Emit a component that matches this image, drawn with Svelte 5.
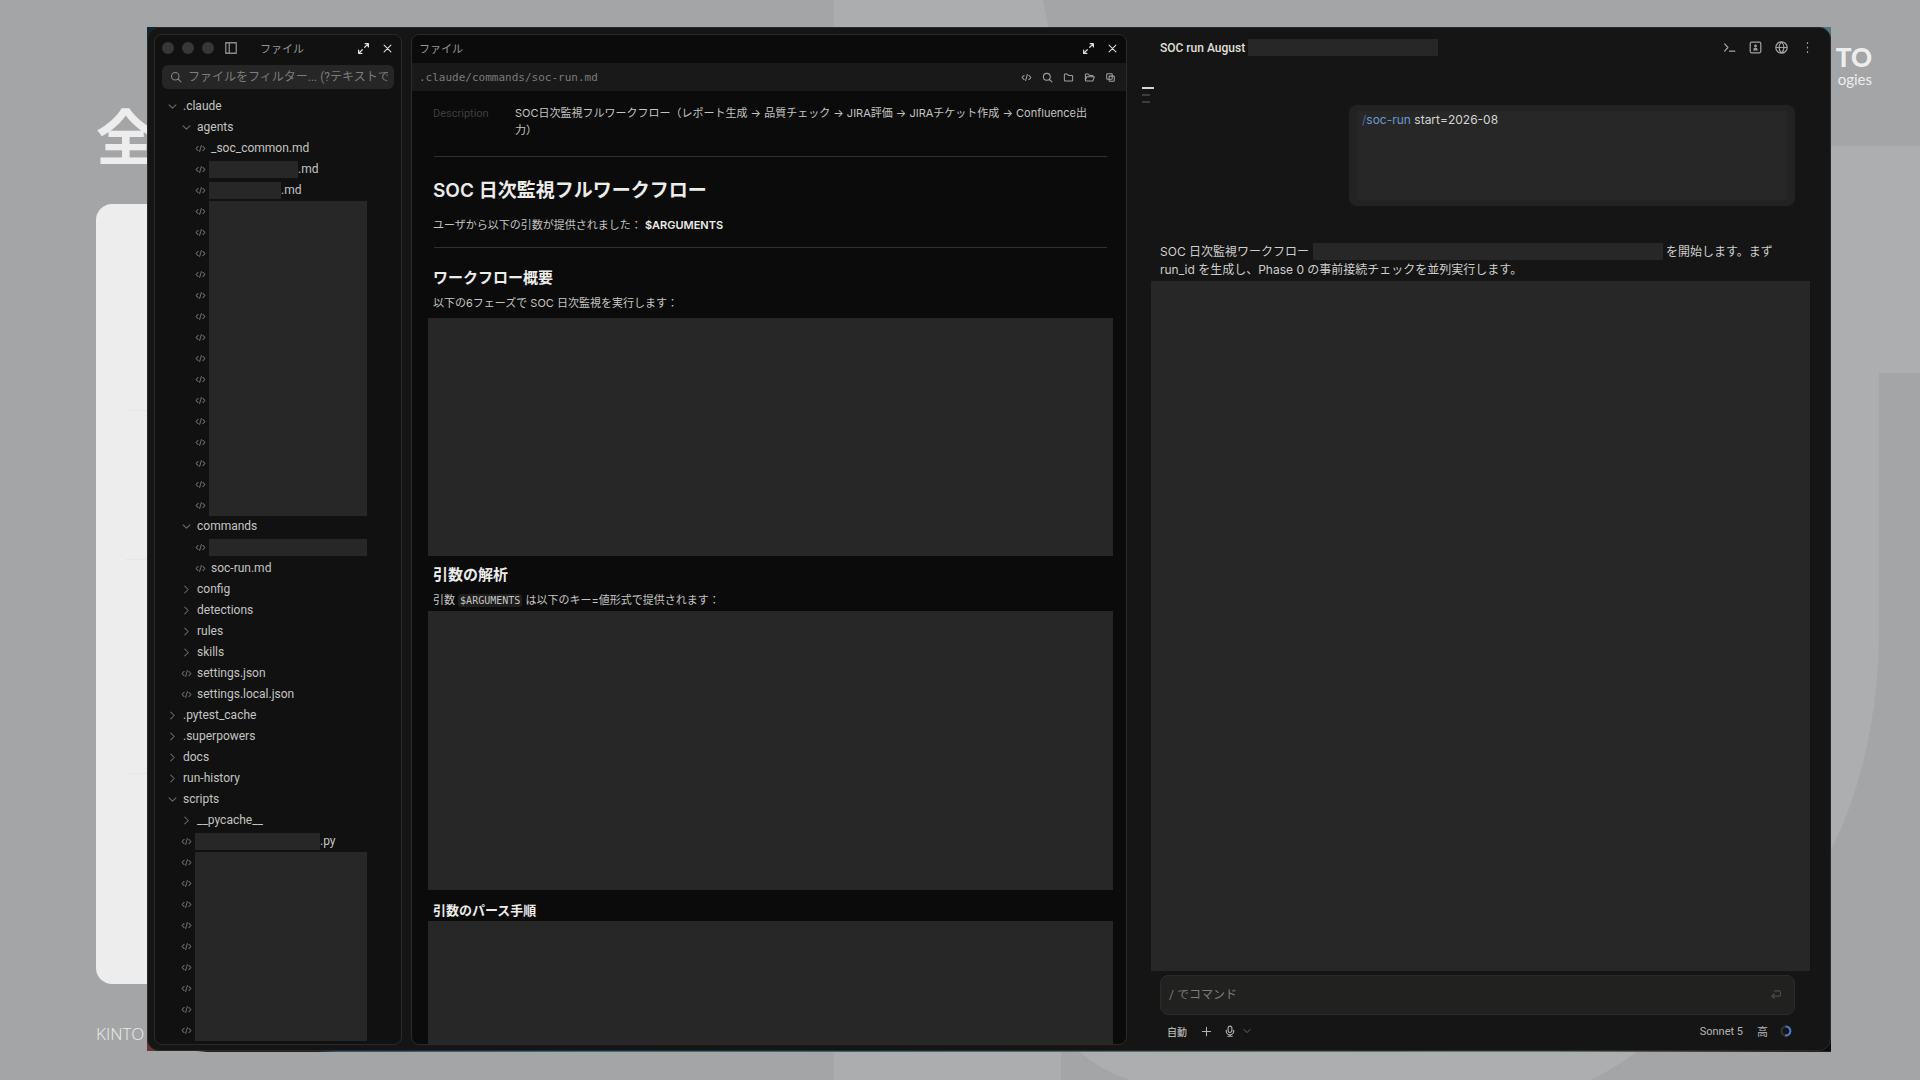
<script>
    // redacted: width of the masked name, rows: number of files under one mask
    const tree = [
        { level: 0, kind: 'open', name: '.claude' },
        { level: 1, kind: 'open', name: 'agents' },
        { level: 2, kind: 'file', name: '_soc_common.md' },
        { level: 2, kind: 'file', name: '.md', redacted: 89 },
        { level: 2, kind: 'file', name: '.md', redacted: 72 },
        { level: 2, kind: 'group', rows: 15, redacted: 158 },
        { level: 1, kind: 'open', name: 'commands' },
        { level: 2, kind: 'file', name: '', redacted: 158 },
        { level: 2, kind: 'file', name: 'soc-run.md' },
        { level: 1, kind: 'closed', name: 'config' },
        { level: 1, kind: 'closed', name: 'detections' },
        { level: 1, kind: 'closed', name: 'rules' },
        { level: 1, kind: 'closed', name: 'skills' },
        { level: 1, kind: 'file', name: 'settings.json' },
        { level: 1, kind: 'file', name: 'settings.local.json' },
        { level: 0, kind: 'closed', name: '.pytest_cache' },
        { level: 0, kind: 'closed', name: '.superpowers' },
        { level: 0, kind: 'closed', name: 'docs' },
        { level: 0, kind: 'closed', name: 'run-history' },
        { level: 0, kind: 'open', name: 'scripts' },
        { level: 1, kind: 'closed', name: '__pycache__' },
        { level: 1, kind: 'file', name: '.py', redacted: 125 },
        { level: 1, kind: 'group', rows: 9, redacted: 172 }
    ];

    const icons = {
        open: 'M3 5.500l5 5 5-5',
        closed: 'M5.500 3l5 5-5 5',
        file: 'M4.500 5L1.500 8l3 3M11.500 5l3 3-3 3M9.300 3.500L6.700 12.500',
        sidebar: 'M2 2h12v12H2zM6 2v12',
        expand: 'M9.500 6.500L14 2M10 2h4v4M6.500 9.500L2 14M2 10v4h4',
        close: 'M3 3l10 10M13 3L3 13',
        search: 'M7 2a5 5 0 1 0 0 10a5 5 0 0 0 0-10M10.600 10.600L14.500 14.500',
        folder: 'M2 4a1 1 0 0 1 1-1h3l2 2h5a1 1 0 0 1 1 1v6a1 1 0 0 1-1 1H3a1 1 0 0 1-1-1z',
        folderOpen: 'M2 12V4a1 1 0 0 1 1-1h3l2 2h4a1 1 0 0 1 1 1v1M2 12l2-5h11l-2 6H3a1 1 0 0 1-1-1',
        copy: 'M3.500 2.500h6a1 1 0 0 1 1 1v6a1 1 0 0 1-1 1h-6a1 1 0 0 1-1-1v-6a1 1 0 0 1 1-1M6 10.500v2a1 1 0 0 0 1 1h5.500a1 1 0 0 0 1-1V7a1 1 0 0 0-1-1h-2M6 10V6h4',
        terminal: 'M2 3.500L6 8l-4 4.500M8 12.500h6.500',
        person: 'M3 1.500h10a1.500 1.500 0 0 1 1.500 1.500v10a1.500 1.500 0 0 1-1.500 1.500H3a1.500 1.500 0 0 1-1.500-1.500V3a1.500 1.500 0 0 1 1.500-1.500M8 5.200a1 1 0 1 0 0 2a1 1 0 0 0 0-2M6 11c0-2.400 4-2.400 4 0z',
        globe: 'M8 1a7 7 0 1 0 0 14a7 7 0 0 0 0-14M1 8h14M8 1c-4 4-4 10 0 14M8 1c4 4 4 10 0 14',
        more: 'M8 2v1M8 7.500v1M8 13v1',
        plus: 'M8 2v12M2 8h12',
        mic: 'M8 1.500a2.500 2.500 0 0 0-2.500 2.500v3.500a2.500 2.500 0 0 0 5 0V4A2.500 2.500 0 0 0 8 1.500M3 7v1a5 5 0 0 0 10 0V7M8 13v2M5 15h6',
        enter: 'M6 2.500h6a2 2 0 0 1 2 2v3a2 2 0 0 1-2 2H2.500M5.500 6.500l-3 3l3 3'
    };

    const fileTools = [
        { icon: 'file', label: 'ソース' },
        { icon: 'search', label: '検索' },
        { icon: 'folder', label: 'フォルダ' },
        { icon: 'folderOpen', label: '開く' },
        { icon: 'copy', label: 'コピー' }
    ];

    const chatTools = [
        { icon: 'terminal', label: 'ターミナル' },
        { icon: 'person', label: 'プロフィール' },
        { icon: 'globe', label: 'ブラウザ' },
        { icon: 'more', label: 'メニュー' }
    ];

    let filter = $state('');
    let prompt = $state('');
</script>

{#snippet icon(name, size)}
    <svg class="icon" width={size} height={size} viewBox="0 0 16 16" aria-hidden="true">
        <path d={icons[name]} />
    </svg>
{/snippet}

<div class="slide">
    <svg class="shapes" viewBox="0 0 1920 1080" preserveAspectRatio="none" aria-hidden="true">
        <path d="M834 0H1043L1051 40V600H834z" fill="#acadaf" />
        <path d="M1780 146H1920V373H1879V640Q1876 760 1831 850H1780z" fill="#acaeb0" />
        <path d="M834 1040H1061V1080H834z" fill="#acadaf" />
        <path d="M1070 1040L1080 1052Q1100 1070 1130 1080H1590Q1616 1068 1636 1052L1650 1040z" fill="#adaeb0" />
    </svg>
    <h1 class="slide-title">全</h1>
    <div class="slide-card">
        <hr />
        <hr />
        <hr />
    </div>
    <p class="slide-footer">KINTO</p>
    <div class="logo">
        <strong>TO</strong>
        <span>ogies</span>
    </div>

    <div class="capture">
        <div class="window">
            <aside class="panel files">
                <header class="bar">
                    <span class="light"></span>
                    <span class="light"></span>
                    <span class="light"></span>
                    <button class="sidebar-toggle" aria-label="サイドバー">{@render icon('sidebar', 14)}</button>
                    <h2>ファイル</h2>
                    <button aria-label="拡大">{@render icon('expand', 13)}</button>
                    <button aria-label="閉じる">{@render icon('close', 11)}</button>
                </header>
                <label class="search">
                    {@render icon('search', 12)}
                    <input type="text" bind:value={filter} aria-label="ファイルをフィルター" placeholder="ファイルをフィルター... (?テキストで内容検索)" />
                </label>
                <ul class="tree">
                    {#each tree as row}
                        <li style="padding-left: {row.level * 14}px">
                            {#if row.kind === 'group'}
                                <div class="group">
                                    <div class="group-icons">
                                        {#each Array(row.rows) as _}
                                            <span class="slot">{@render icon('file', 11)}</span>
                                        {/each}
                                    </div>
                                    <span class="redacted" style="width: {row.redacted}px"></span>
                                </div>
                            {:else}
                                <button class="row" aria-label={row.name || 'ファイル'}>
                                    <span class="slot">{@render icon(row.kind, 11)}</span>
                                    {#if row.redacted}
                                        <span class="redacted" style="width: {row.redacted}px"></span>{row.name}
                                    {:else}
                                        <span class="name">{row.name}</span>
                                    {/if}
                                </button>
                            {/if}
                        </li>
                    {/each}
                </ul>
            </aside>

            <section class="panel viewer">
                <header class="bar">
                    <h2>ファイル</h2>
                    <button aria-label="拡大">{@render icon('expand', 13)}</button>
                    <button aria-label="閉じる">{@render icon('close', 11)}</button>
                </header>
                <div class="path">
                    <code>.claude/commands/soc-run.md</code>
                    {#each fileTools as tool}
                        <button aria-label={tool.label}>{@render icon(tool.icon, 11)}</button>
                    {/each}
                </div>
                <article>
                    <dl>
                        <dt>Description</dt>
                        <dd>SOC日次監視フルワークフロー（レポート生成 → 品質チェック → JIRA評価 → JIRAチケット作成 → Confluence出力）</dd>
                    </dl>
                    <hr />
                    <h1>SOC 日次監視フルワークフロー</h1>
                    <p class="intro">ユーザから以下の引数が提供されました： <strong>$ARGUMENTS</strong></p>
                    <hr />
                    <h2 class="first">ワークフロー概要</h2>
                    <p>以下の6フェーズで SOC 日次監視を実行します：</p>
                    <div class="redacted overview"></div>
                    <h2>引数の解析</h2>
                    <p>引数 <code>$ARGUMENTS</code> は以下のキー=値形式で提供されます：</p>
                    <div class="redacted parsing"></div>
                    <h3>引数のパース手順</h3>
                    <div class="redacted steps"></div>
                </article>
            </section>

            <main class="chat">
                <header>
                    <h2>SOC run August</h2>
                    <span class="redacted"></span>
                    <nav>
                        {#each chatTools as tool}
                            <button aria-label={tool.label}>{@render icon(tool.icon, 13)}</button>
                        {/each}
                    </nav>
                </header>
                <div class="outline">
                    <i class="current"></i>
                    <i></i>
                    <i></i>
                </div>
                <div class="bubble">
                    <p><span>/<b>soc-run</b></span> start=2026-08</p>
                </div>
                <p class="reply">
                    SOC 日次監視ワークフロー<span class="redacted"></span>を開始します。まず<br />
                    run_id を生成し、Phase 0 の事前接続チェックを並列実行します。
                </p>
                <div class="redacted output"></div>
                <form class="composer" onsubmit={(ev) => ev.preventDefault()}>
                    <input type="text" bind:value={prompt} aria-label="メッセージ" placeholder="/ でコマンド" />
                    <button aria-label="送信">{@render icon('enter', 12)}</button>
                </form>
                <footer>
                    <button class="mode">自動</button>
                    <button aria-label="追加">{@render icon('plus', 11)}</button>
                    <button class="mic" aria-label="音声入力">{@render icon('mic', 12)}</button>
                    <button class="caret" aria-label="音声オプション">{@render icon('open', 10)}</button>
                    <button class="model">Sonnet 5</button>
                    <button class="effort">高</button>
                    <svg class="usage" width="12" height="12" viewBox="0 0 12 12" aria-hidden="true">
                        <circle cx="6" cy="6" r="4.500" />
                        <path d="M5.500 1.500A4.500 4.500 0 1 1 5 10.400" />
                    </svg>
                </footer>
            </main>
        </div>
    </div>
</div>

<style>
    :global(body) {
        margin: 0;
        background: #a4a5a7;
    }

    .slide {
        position: relative;
        display: flex;
        flex-direction: column;
        box-sizing: border-box;
        min-height: 100vh;
        padding: 96px 96px 34px;
        overflow: hidden;
        background: #a4a5a7;
        color: #ededed;
        font-family: Roboto, "Noto Sans CJK JP", sans-serif;
    }

    .shapes {
        position: absolute;
        inset: 0;
        width: 100%;
        height: 100%;
    }

    .slide-title {
        position: relative;
        margin: 0 0 20px;
        font-size: 60px;
        line-height: 88px;
        font-weight: 700;
    }

    .slide-card {
        position: relative;
        flex: 1;
        display: grid;
        grid-template-rows: 207fr 149fr 214fr 210fr;
        align-items: end;
        width: 50%;
        padding: 0 30px;
        box-sizing: border-box;
        border-radius: 16px;
        background: #ededed;
    }

    .slide-card hr {
        width: 100%;
        margin: 0;
        border: 0;
        border-top: 1px solid #e6e6e6;
    }

    .slide-footer {
        position: relative;
        margin: 38px 0 0;
        font-family: "Open Sans", sans-serif;
        font-size: 17px;
        line-height: 24px;
        font-weight: 300;
    }

    .logo {
        position: absolute;
        top: 40px;
        right: 48px;
        display: flex;
        flex-direction: column;
        align-items: flex-end;
        font-family: Lato, sans-serif;
    }

    .logo strong {
        font-size: 26px;
        line-height: 34px;
        font-weight: 900;
    }

    .logo span {
        font-size: 15px;
        line-height: 10px;
    }

    /* square screenshot frame, the desktop shows at the rounded corners */
    .capture {
        position: absolute;
        inset: 27px 89px 28px 147px;
        padding-bottom: 1px;
        background:
            linear-gradient(90deg, #a4a5a7 50px, #222 60px, #222 170px, #2c5a78 190px, #3a6f8c 480px, #2f6f68 700px, #48706b 900px, #6d7778 1400px, #222 1670px) bottom / 100% 1px no-repeat,
            linear-gradient(#0b2634, #6e3333) left / 50% 100% no-repeat,
            linear-gradient(#4f7484, #0c0c0c) right / 50% 100% no-repeat;
    }

    .window {
        display: grid;
        grid-template-columns: auto minmax(0, 716fr) minmax(0, 703fr);
        grid-template-rows: minmax(0, 1fr);
        box-sizing: border-box;
        height: 100%;
        padding: 6px 0 5px;
        border: 1px solid #2a2a2a;
        border-radius: 12px;
        background: #151515;
        color: #c4c4c2;
        font-size: 12px;
    }

    button {
        display: flex;
        align-items: center;
        padding: 0;
        border: 0;
        background: none;
        color: inherit;
        font: inherit;
    }

    input {
        flex: 1;
        min-width: 0;
        padding: 0;
        border: 0;
        outline: 0;
        background: none;
        color: inherit;
        font: inherit;
    }

    .icon {
        display: block;
        fill: none;
        stroke: currentColor;
        stroke-width: 1.5;
        stroke-linecap: round;
        stroke-linejoin: round;
    }

    .redacted {
        background: #272727;
    }

    .panel {
        display: flex;
        flex-direction: column;
        box-sizing: border-box;
        overflow: hidden;
        border: 1px solid #2a2a28;
        border-radius: 8px;
        background: #111;
    }

    .bar {
        display: flex;
        align-items: center;
        gap: 12px;
        box-sizing: border-box;
        height: 28px;
        padding: 0 8px 2px 7px;
        color: #dededc;
    }

    .bar h2 {
        flex: 1;
        margin: 0;
        color: #969694;
        font-size: 11px;
        font-weight: 400;
    }

    .files {
        width: 248px;
        margin: 0 9px 0 6px;
    }

    .files .bar {
        gap: 8px;
    }

    .files .bar h2 + button {
        margin-right: 4px;
    }

    .light {
        width: 12px;
        height: 12px;
        border-radius: 50%;
        background: #373737;
    }

    .sidebar-toggle {
        margin: 0 14px 0 2px;
        color: #8c8c86;
    }

    .search {
        display: flex;
        align-items: center;
        gap: 6px;
        height: 24px;
        margin: 2px 7px 7px;
        padding: 0 6px 0 8px;
        border-radius: 6px;
        background: #262626;
        color: #858583;
    }

    .search input::placeholder,
    .composer input::placeholder {
        color: #7c7c7a;
        opacity: 1;
    }

    .tree {
        margin: 0;
        padding: 0 10px;
        list-style: none;
        line-height: 21px;
    }

    .row {
        gap: 4px;
        width: 100%;
        height: 21px;
        white-space: nowrap;
    }

    .row .redacted {
        height: 17px;
        margin: 0 -4px 0 -2px;
    }

    .slot {
        display: flex;
        align-items: center;
        justify-content: center;
        flex: none;
        width: 14px;
        height: 21px;
        color: #6c6c6a;
    }

    .group {
        display: flex;
        gap: 2px;
    }

    .viewer {
        background: #0b0b0b;
    }

    .path {
        display: flex;
        align-items: center;
        gap: 10px;
        height: 28px;
        padding: 0 10px 0 7px;
        background: #191919;
        color: #a0a09e;
    }

    .path code {
        flex: 1;
        color: #7b7b79;
        font-family: "DejaVu Sans Mono", monospace;
        font-size: 11px;
    }

    article {
        flex: 1;
        display: flex;
        flex-direction: column;
        min-height: 0;
        padding: 14px 13px 0 16px;
        font-family: Inter, "Noto Sans CJK JP", sans-serif;
        font-size: 11px;
        line-height: 17px;
    }

    dl {
        display: flex;
        margin: 0 12px 17px 5px;
    }

    dt {
        width: 82px;
        color: #3f3f3e;
        font-family: Roboto, sans-serif;
    }

    dd {
        flex: 1;
        margin: 0;
    }

    article hr {
        width: calc(100% - 12px);
        margin: 0 auto;
        border: 0;
        border-top: 1px solid #30302f;
    }

    article h1 {
        margin: 20px 5px 12px;
        color: #ececea;
        font-size: 19px;
        line-height: 28px;
        font-weight: 600;
    }

    article h2 {
        margin: 9px 5px 7px;
        color: #ececea;
        font-size: 15px;
        line-height: 20px;
        font-weight: 600;
    }

    article h2.first {
        margin-top: 20px;
    }

    article h3 {
        margin: 11px 5px 2px;
        color: #ececea;
        font-size: 13px;
        line-height: 18px;
        font-weight: 600;
    }

    article p {
        margin: 0 5px 2px;
    }

    article .intro {
        margin-bottom: 13px;
    }

    article strong {
        color: #ececea;
        font-weight: 600;
    }

    article code {
        padding: 1px 2px;
        border-radius: 3px;
        background: #1e1e1d;
        font-family: "DejaVu Sans Mono", monospace;
        font-size: 10px;
        line-height: 14px;
    }

    .overview {
        flex: 238;
        margin-top: 4px;
    }

    .parsing {
        flex: 279;
    }

    .steps {
        flex: 123;
    }

    .chat {
        display: flex;
        flex-direction: column;
        padding: 0 35px 0 33px;
    }

    .chat header {
        display: flex;
        align-items: center;
        height: 27px;
        margin-right: -19px;
    }

    .chat h2 {
        margin: 0;
        color: #e0e0de;
        font-size: 12px;
        font-weight: 500;
    }

    .chat header .redacted {
        width: 190px;
        height: 17px;
        margin-left: 3px;
    }

    .chat nav {
        display: flex;
        gap: 13px;
        margin-left: auto;
        color: #a2a2a0;
    }

    .outline {
        display: flex;
        flex-direction: column;
        gap: 5px;
        height: 18px;
        margin: 26px 0 0 -18px;
    }

    .outline i {
        width: 8px;
        height: 2px;
        background: #3c3c3b;
    }

    .outline .current {
        width: 12px;
        background: #d6d6d4;
    }

    .bubble {
        align-self: flex-end;
        box-sizing: border-box;
        width: 446px;
        height: 101px;
        padding: 6px 8px;
        border-radius: 8px;
        background: #222;
        font-family: Inter, sans-serif;
    }

    .bubble p {
        box-sizing: border-box;
        height: 100%;
        margin: 0;
        padding: 0 5px;
        background: #272727;
        color: #d4d4d2;
        line-height: 18px;
    }

    .bubble span {
        color: #4a6c9f;
    }

    .bubble b {
        color: #6c97d4;
        font-weight: 400;
    }

    .reply {
        margin: 37px 0 2px;
        color: #cececc;
        font-family: Inter, "Noto Sans CJK JP", sans-serif;
        line-height: 18px;
        white-space: nowrap;
    }

    .reply .redacted {
        display: inline-block;
        width: 350px;
        height: 17px;
        margin: 0 3px 0 4px;
        vertical-align: top;
    }

    .output {
        flex: 1;
        margin: 0 -15px 4px -9px;
    }

    .composer {
        display: flex;
        align-items: center;
        box-sizing: border-box;
        height: 40px;
        padding: 0 12px 0 8px;
        border: 1px solid #2b2b2a;
        border-radius: 8px;
        background: #21211f;
        color: #4c4c4a;
    }

    .chat footer {
        display: flex;
        align-items: center;
        height: 20px;
        margin-top: 6px;
        padding: 0 3px 4px 7px;
        color: #b4b4b2;
        font-size: 11px;
    }

    .mode {
        margin-right: 14px;
        font-size: 10px;
        font-weight: 500;
    }

    .mic {
        margin: 0 6px 0 12px;
    }

    .caret {
        color: #6a6a68;
    }

    .model {
        margin-left: auto;
    }

    .effort {
        margin: 0 12px 0 14px;
    }

    .usage {
        fill: none;
        stroke: #343434;
        stroke-width: 2;
    }

    .usage path {
        stroke: #4a78c8;
    }
</style>
